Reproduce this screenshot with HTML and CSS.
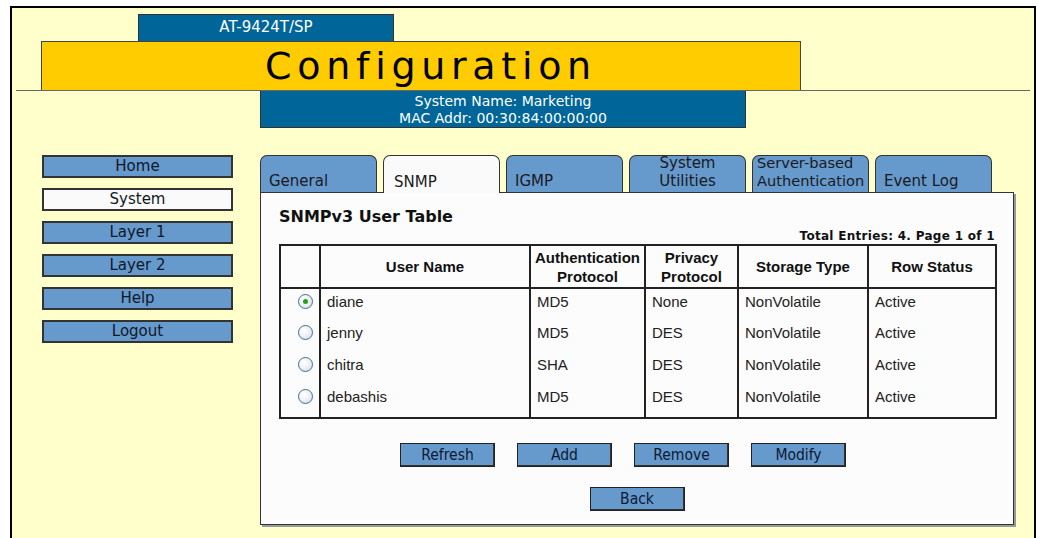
FILE: index.html
```html
<!DOCTYPE html>
<html lang="en">
<head>
  <meta charset="UTF-8">
  <title>Configuration - AT-9424T/SP</title>
  <link rel="stylesheet" href="styles.css">
</head>
<body>
  <div class="frame">
    <header>
      <div class="model">AT-9424T/SP</div>
      <div class="banner"><h1>Configuration</h1></div>
      <div class="rule"></div>
      <div class="sysinfo">
        System Name: Marketing<br>
        MAC Addr: 00:30:84:00:00:00
      </div>
    </header>

    <div class="main">
      <nav class="sidenav">
        <a class="navbtn">Home</a>
        <a class="navbtn current">System</a>
        <a class="navbtn">Layer 1</a>
        <a class="navbtn">Layer 2</a>
        <a class="navbtn">Help</a>
        <a class="navbtn">Logout</a>
      </nav>

      <div class="content">
        <div class="tabs">
          <div class="tab">General</div>
          <div class="tab active">SNMP</div>
          <div class="tab">IGMP</div>
          <div class="tab center">System<br>Utilities</div>
          <div class="tab tight">Server-based<br>Authentication</div>
          <div class="tab">Event Log</div>
        </div>

        <div class="panel">
          <h3>SNMPv3 User Table</h3>
          <div class="total">Total Entries: 4. Page 1 of 1</div>

          <table class="users">
            <colgroup>
              <col style="width: 40px">
              <col style="width: 210px">
              <col style="width: 115px">
              <col style="width: 93px">
              <col style="width: 130px">
              <col>
            </colgroup>
            <thead>
              <tr>
                <th></th>
                <th>User Name</th>
                <th>Authentication<br>Protocol</th>
                <th>Privacy<br>Protocol</th>
                <th>Storage Type</th>
                <th>Row Status</th>
              </tr>
            </thead>
            <tbody>
              <tr>
                <td class="pick"><span class="radio checked"></span></td>
                <td>diane</td><td>MD5</td><td>None</td><td>NonVolatile</td><td>Active</td>
              </tr>
              <tr>
                <td class="pick"><span class="radio"></span></td>
                <td>jenny</td><td>MD5</td><td>DES</td><td>NonVolatile</td><td>Active</td>
              </tr>
              <tr>
                <td class="pick"><span class="radio"></span></td>
                <td>chitra</td><td>SHA</td><td>DES</td><td>NonVolatile</td><td>Active</td>
              </tr>
              <tr class="last">
                <td class="pick"><span class="radio"></span></td>
                <td>debashis</td><td>MD5</td><td>DES</td><td>NonVolatile</td><td>Active</td>
              </tr>
            </tbody>
          </table>

          <div class="actions">
            <button>Refresh</button>
            <button>Add</button>
            <button>Remove</button>
            <button>Modify</button>
          </div>
          <div class="actions back">
            <button>Back</button>
          </div>
        </div>
      </div>
    </div>
  </div>
</body>
</html>
```

FILE: styles.css
```css
html, body {
  margin: 0;
  height: 100%;
  overflow: hidden;
  background-color: #fff;
}
body {
  font-family: "DejaVu Sans", Verdana, sans-serif;
  color: #1a1a2a;
}
.frame {
  box-sizing: border-box;
  height: 532px;
  margin: 6px 2px 0 10px;
  border: 2px solid #000;
  border-bottom: none;
  background-color: #ffffcc;
  overflow: hidden;
}
header {
  padding-top: 6px;
}
.model {
  box-sizing: border-box;
  width: 256px;
  height: 27px;
  margin-left: 126px;
  background-color: #006699;
  border: 1px solid #333;
  border-bottom: none;
  color: #fff;
  font-size: 15px;
  line-height: 25px;
  text-align: center;
}
.banner {
  box-sizing: border-box;
  width: 760px;
  height: 49px;
  margin-left: 29px;
  background-color: #ffcc00;
  border: 1px solid #444;
  border-bottom: none;
}
.banner h1 {
  margin: 0;
  padding-left: 20px;
  font-size: 38px;
  font-weight: normal;
  letter-spacing: 5.7px;
  line-height: 48px;
  text-align: center;
  color: #000;
}
.rule {
  margin: 0 4px;
  border-top: 1px solid #666;
}
.sysinfo {
  box-sizing: border-box;
  width: 486px;
  height: 37px;
  margin-left: 248px;
  padding-top: 2px;
  background-color: #006699;
  border: 1px solid #333;
  border-top: none;
  color: #fff;
  font-size: 14px;
  line-height: 17px;
  text-align: center;
}
.main {
  display: flex;
  margin-top: 27px;
}
.sidenav {
  display: flex;
  flex-direction: column;
  gap: 10px;
  width: 191px;
  margin-left: 30px;
}
.navbtn {
  box-sizing: border-box;
  height: 23px;
  background-color: #6699cc;
  border: 2px solid #333;
  font-size: 15px;
  line-height: 19px;
  text-align: center;
  color: #101828;
}
.navbtn.current {
  background-color: #fafafa;
}
.content {
  width: 754px;
  margin-left: 27px;
}
.tabs {
  display: flex;
  align-items: flex-end;
  gap: 6px;
  height: 37px;
}
.tab {
  box-sizing: border-box;
  display: flex;
  align-items: flex-end;
  width: 117px;
  height: 37px;
  padding: 0 4px 2px 8px;
  background-color: #6699cc;
  border: 1px solid #333;
  border-bottom: none;
  border-radius: 7px 7px 0 0;
  font-size: 15px;
  line-height: 18px;
  color: #1a1a22;
  white-space: nowrap;
}
.tab.center {
  justify-content: center;
  text-align: center;
  padding-left: 4px;
}
.tab.tight {
  padding: 0 0 2px 4px;
  font-size: 14.6px;
}
.tab.active {
  position: relative;
  z-index: 1;
  height: 38px;
  margin-bottom: -1px;
  padding-left: 10px;
  background-color: #fafafa;
}
.panel {
  box-sizing: border-box;
  height: 333px;
  padding: 0 18px 0 18px;
  background-color: #fcfcfc;
  border: 1px solid #333;
  box-shadow: 2px 2px 0 #999;
}
.panel h3 {
  margin: 14px 0 0;
  font-size: 16px;
  line-height: 20px;
  color: #111;
}
.total {
  margin-top: 2px;
  font-size: 12px;
  font-weight: bold;
  letter-spacing: 0.3px;
  line-height: 14px;
  text-align: right;
  color: #111;
}
.users {
  width: 718px;
  margin-top: 1px;
  border-collapse: collapse;
  border: 2px solid #222;
  font-family: "Liberation Sans", Arial, sans-serif;
  font-size: 15px;
  color: #222;
}
.users th {
  height: 41px;
  padding: 0 2px;
  border: 2px solid #222;
  font-weight: bold;
  line-height: 19px;
  color: #111;
}
.users td {
  height: 32px;
  box-sizing: border-box;
  padding: 3px 6px 0;
  border-left: 2px solid #222;
  vertical-align: top;
  line-height: 19px;
}
.users tr.last td {
  height: 34px;
}
.users td.pick {
  padding: 5px 0 0 17px;
}
.radio {
  display: block;
  box-sizing: border-box;
  width: 15px;
  height: 15px;
  border: 1px solid #3b6fa0;
  border-radius: 50%;
  background: radial-gradient(circle at 40% 35%, #fff 0%, #f2f2f2 45%, #cfd4da 100%);
  position: relative;
}
.radio.checked::after {
  content: "";
  position: absolute;
  left: 4px;
  top: 4px;
  width: 5px;
  height: 5px;
  border-radius: 50%;
  background-color: #21a121;
}
.actions {
  display: flex;
  justify-content: center;
  gap: 22px;
  margin-top: 24px;
  padding-right: 28px;
}
.actions.back {
  margin-top: 20px;
  padding-right: 0;
}
.actions button {
  box-sizing: border-box;
  width: 95px;
  height: 24px;
  padding: 0;
  background-color: #6699cc;
  border: 1px solid #222;
  box-shadow: inset -1px -1px 0 #333;
  font-family: "DejaVu Sans Condensed", "DejaVu Sans", sans-serif;
  font-stretch: condensed;
  font-size: 15.5px;
  color: #0d1a33;
  cursor: pointer;
}
```
